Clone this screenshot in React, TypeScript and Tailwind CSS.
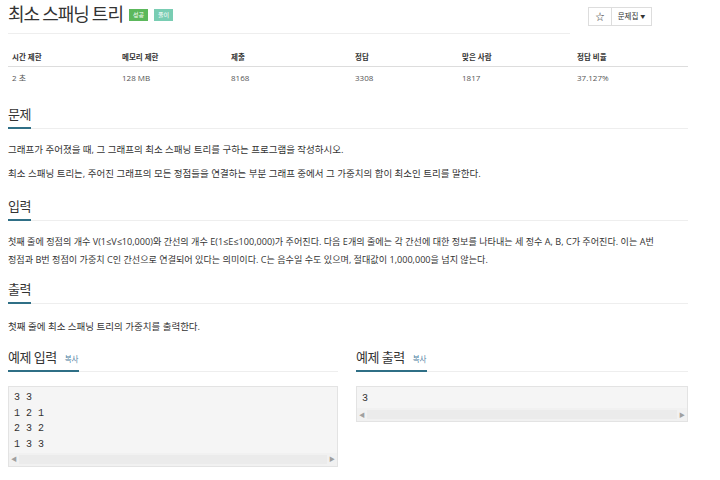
import React from "react";

const Heading = ({ children, extra }: { children: React.ReactNode; extra?: React.ReactNode }) => (
  <div className="flex border-b border-[#eee]">
    <div className="-mb-px flex items-baseline border-b-2 border-[#2f6f86] pb-[3px]">
      <span className="text-[13px] leading-[20px] tracking-[-0.5px] text-[#333]">{children}</span>
      {extra}
    </div>
  </div>
);

const Scrollbar = () => (
  <div className="flex h-[13px] items-center bg-[#f1f1f1] text-[6px] leading-none text-[#a0a0a0]">
    <span className="w-[10px] text-center">◀</span>
    <div className="h-[9px] flex-1 bg-[#ebebeb]" />
    <span className="w-[10px] text-center">▶</span>
  </div>
);

export default function App() {
  const heads = ["시간 제한", "메모리 제한", "제출", "정답", "맞은 사람", "정답 비율"];
  const vals = ["2 초", "128 MB", "8168", "3308", "1817", "37.127%"];
  return (
    <div className="h-[480px] w-[720px] overflow-hidden bg-white font-['Open_Sans','Noto_Sans_CJK_KR',sans-serif] text-[#333]">
      <div className="w-[688px] pl-[8px]">
        {/* top row */}
        <div className="flex">
          <div className="flex h-[34px] w-[562px] items-start border-b border-[#eee] pt-[2px]">
            <h1 className="font-['Noto_Sans_CJK_KR',sans-serif] text-[18px] font-normal leading-[22px] tracking-[-1px] text-[#333]">
              최소 스패닝 트리
            </h1>
            <span className="ml-[6px] mt-[7px] flex h-[12px] w-[19px] items-center justify-center bg-[#5cb85c] text-[6px] leading-none text-white">
              성공
            </span>
            <span className="ml-[6px] mt-[7px] flex h-[12px] w-[19px] items-center justify-center bg-[#79cdb3] text-[6px] leading-none text-white">
              풀이
            </span>
          </div>
          <div className="ml-[18px] mt-[7px] flex h-[19px]">
            <div className="flex w-[24px] items-center justify-center border border-[#ddd] text-[9px] text-[#333]">
              ☆
            </div>
            <div className="flex w-[40px] items-center justify-center gap-[2px] border border-l-0 border-[#ddd] text-[7.5px] text-[#333]">
              문제집 <span className="text-[5px]">▼</span>
            </div>
          </div>
        </div>

        {/* table */}
        <div className="mt-[14px] grid grid-cols-[110px_109px_124px_107px_115px_1fr]">
          {heads.map((h) => (
            <div key={h} className="h-[19px] border-b border-[#ddd] pl-[4px] text-[7.5px] font-bold leading-[19px] text-[#333]">
              {h}
            </div>
          ))}
          {vals.map((v) => (
            <div key={v} className="h-[21px] pl-[4px] text-[8px] leading-[21px] text-[#555]">
              {v}
            </div>
          ))}
        </div>

        {/* 문제 */}
        <div className="mt-[16px]">
          <Heading>문제</Heading>
          <p className="mt-[12px] text-[9.5px] leading-[18px]">
            그래프가 주어졌을 때, 그 그래프의 최소 스패닝 트리를 구하는 프로그램을 작성하시오.
          </p>
          <p className="mt-[6px] text-[9.5px] leading-[18px]">
            최소 스패닝 트리는, 주어진 그래프의 모든 정점들을 연결하는 부분 그래프 중에서 그 가중치의 합이 최소인 트리를 말한다.
          </p>
        </div>

        {/* 입력 */}
        <div className="mt-[13px]">
          <Heading>입력</Heading>
          <p className="mt-[12px] whitespace-nowrap text-[9.1px] leading-[18px]">
            첫째 줄에 정점의 개수 V(1≤V≤10,000)와 간선의 개수 E(1≤E≤100,000)가 주어진다. 다음 E개의 줄에는 각 간선에 대한 정보를 나타내는 세 정수 A, B, C가 주어진다. 이는 A번
            <br />
            정점과 B번 정점이 가중치 C인 간선으로 연결되어 있다는 의미이다. C는 음수일 수도 있으며, 절대값이 1,000,000을 넘지 않는다.
          </p>
        </div>

        {/* 출력 */}
        <div className="mt-[10px]">
          <Heading>출력</Heading>
          <p className="mt-[14px] text-[9.5px] leading-[18px]">첫째 줄에 최소 스패닝 트리의 가중치를 출력한다.</p>
        </div>

        {/* 예제 */}
        <div className="mt-[11px] grid grid-cols-[330px_332px] gap-[18px]">
          <div>
            <Heading extra={<span className="ml-[8px] text-[7.5px] text-[#4f7fa3]">복사</span>}>예제 입력</Heading>
            <div className="mt-[14px] border border-[#e3e3e3] bg-[#f5f5f5]">
              <pre className="px-[5px] pt-[3px] font-['Liberation_Mono',monospace] text-[10px] leading-[15.7px] text-[#333]">
{`3 3
1 2 1
2 3 2
1 3 3`}
              </pre>
              <Scrollbar />
            </div>
          </div>
          <div>
            <Heading extra={<span className="ml-[8px] text-[7.5px] text-[#4f7fa3]">복사</span>}>예제 출력</Heading>
            <div className="mt-[14px] border border-[#e3e3e3] bg-[#f5f5f5]">
              <pre className="px-[5px] pt-[3px] font-['Liberation_Mono',monospace] text-[10px] leading-[18px] text-[#333]">3</pre>
              <Scrollbar />
            </div>
          </div>
        </div>
      </div>
    </div>
  );
}
